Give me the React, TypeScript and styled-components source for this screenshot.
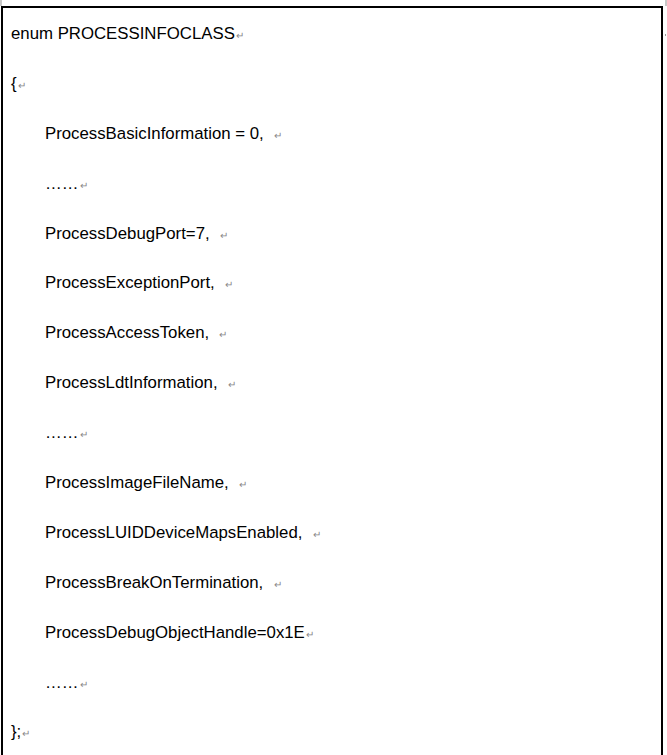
import React from "react";
import styled, { createGlobalStyle } from "styled-components";

const Global = createGlobalStyle`
  html, body { margin: 0; padding: 0; background: #fff; }
  body { font-family: "Liberation Sans", Arial, sans-serif; }
`;

const Page = styled.div`
  position: relative;
  width: 667px;
  height: 755px;
  overflow: hidden;
  background: #fff;
`;

const CropMark = styled.div<{ $side: "left" | "right" }>`
  position: absolute;
  top: 0;
  ${(p) => (p.$side === "left" ? "left: 0;" : "right: 0;")}
  width: 2px;
  height: 6px;
  background: #c8c8c8;
`;

const Dot = styled.div`
  position: absolute;
  right: 1px;
  top: 34px;
  width: 1px;
  height: 2px;
  background: #999;
`;

const Frame = styled.div`
  margin: 6px 0 0 1px;
  width: 662px;
  border-top: 2px solid #000;
  border-left: 2px solid #000;
  border-right: 2px solid #000;
  height: 760px;
  padding-top: 1px;
  box-sizing: border-box;
`;

const Line = styled.div<{ $indent?: boolean }>`
  height: 49.9px;
  line-height: 49.9px;
  font-size: 16.8px;
  color: #000;
  white-space: pre;
  padding-left: ${(p) => (p.$indent ? "42px" : "8px")};
`;

const Mark = styled.span`
  font-size: 10px;
  color: #888;
  margin-left: 1px;
`;

const lines: { text: string; indent?: boolean }[] = [
  { text: "enum PROCESSINFOCLASS" },
  { text: "{" },
  { text: "ProcessBasicInformation = 0,  ", indent: true },
  { text: "……", indent: true },
  { text: "ProcessDebugPort=7,  ", indent: true },
  { text: "ProcessExceptionPort,  ", indent: true },
  { text: "ProcessAccessToken,  ", indent: true },
  { text: "ProcessLdtInformation,  ", indent: true },
  { text: "……", indent: true },
  { text: "ProcessImageFileName,  ", indent: true },
  { text: "ProcessLUIDDeviceMapsEnabled,  ", indent: true },
  { text: "ProcessBreakOnTermination,  ", indent: true },
  { text: "ProcessDebugObjectHandle=0x1E", indent: true },
  { text: "……", indent: true },
  { text: "};" },
];

export default function App() {
  return (
    <>
      <Global />
      <Page>
        <CropMark $side="left" />
        <CropMark $side="right" />
        <Dot />
        <Frame>
          {lines.map((l, i) => (
            <Line key={i} $indent={l.indent}>
              {l.text}
              <Mark>↵</Mark>
            </Line>
          ))}
        </Frame>
      </Page>
    </>
  );
}
